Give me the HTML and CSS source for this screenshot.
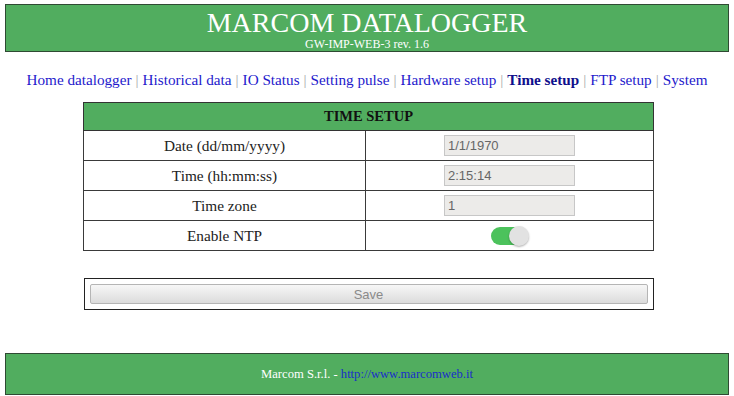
FILE: index.html
```html
<!DOCTYPE html>
<html>
<head>
<meta charset="utf-8">
<link rel="stylesheet" href="styles.css">
</head>
<body>
<header class="top">
  <div class="title">MARCOM DATALOGGER</div>
  <div class="subtitle">GW-IMP-WEB-3 rev. 1.6</div>
</header>
<nav class="menu">
  <a href="#">Home datalogger</a><span class="sep">|</span><a href="#">Historical data</a><span class="sep">|</span><a href="#">IO Status</a><span class="sep">|</span><a href="#">Setting pulse</a><span class="sep">|</span><a href="#">Hardware setup</a><span class="sep">|</span><a href="#" class="active">Time setup</a><span class="sep">|</span><a href="#">FTP setup</a><span class="sep">|</span><a href="#">System</a>
</nav>
<main class="content">
  <table class="setup">
    <tr><th colspan="2">TIME SETUP</th></tr>
    <tr><td class="label">Date (dd/mm/yyyy)</td><td><input class="field" type="text" value="1/1/1970" disabled></td></tr>
    <tr><td class="label">Time (hh:mm:ss)</td><td><input class="field" type="text" value="2:15:14" disabled></td></tr>
    <tr><td class="label">Time zone</td><td><input class="field" type="text" value="1" disabled></td></tr>
    <tr><td class="label">Enable NTP</td><td><span class="toggle"><span class="knob"></span></span></td></tr>
  </table>
  <div class="savebox">
    <button class="save" disabled>Save</button>
  </div>
</main>
<footer class="bottom">
  <span>Marcom S.r.l. - </span><a href="#">http://www.marcomweb.it</a>
</footer>
</body>
</html>
```
FILE: styles.css
```css
html, body { background: #ffffff; }
body {
  margin: 4px 5px 0;
  font-family: "Liberation Serif", "Times New Roman", serif;
  color: #222;
}
.top {
  height: 46px;
  border: 1px solid #2f4a33;
  background: #51ad5f;
  color: #ffffff;
  text-align: center;
}
.title {
  font-size: 28px;
  line-height: 28px;
  padding-top: 4px;
}
.subtitle {
  font-size: 12px;
  line-height: 12px;
  padding-top: 1px;
}
.menu {
  text-align: center;
  font-size: 15.2px;
  line-height: 20px;
  padding-top: 18px;
  height: 32px;
}
.menu a {
  color: #2419cc;
  text-decoration: none;
}
.menu a.active {
  font-weight: bold;
  color: #0f0f8c;
}
.sep {
  color: #aaaaaa;
  margin: 0 4px;
}
.content {
  display: block;
  padding-left: 3px;
}
.setup {
  width: 571px;
  margin: 0 auto;
  border-collapse: collapse;
  border: 1px solid #333;
  font-size: 15.3px;
}
.setup th {
  background: #51ad5f;
  color: #111;
  font-size: 14.5px;
  height: 27px;
  padding: 0;
  border: 1px solid #333;
}
.setup td {
  border: 1px solid #3a3a3a;
  text-align: center;
  height: 29px;
  padding: 0;
}
.setup td.label {
  width: 281px;
}
.field {
  width: 131px;
  height: 21px;
  box-sizing: border-box;
  border: 1px solid #c7c7c7;
  background: #ecebe9;
  color: #666;
  font-family: "Liberation Sans", Arial, sans-serif;
  font-size: 13px;
  padding: 0 3px;
  margin: 0;
  vertical-align: middle;
}
.toggle {
  display: inline-block;
  position: relative;
  width: 37px;
  height: 18px;
  border-radius: 9px;
  background: #4cc25c;
  vertical-align: middle;
}
.knob {
  position: absolute;
  right: -1px;
  top: -1px;
  width: 20px;
  height: 20px;
  border-radius: 50%;
  background: #e2e2e2;
  box-shadow: 0 1px 2px rgba(0,0,0,0.3);
}
.savebox {
  width: 570px;
  box-sizing: border-box;
  margin: 27px auto 0;
  border: 1px solid #222;
  padding: 5px;
}
.save {
  display: block;
  width: 100%;
  height: 20px;
  border: 1px solid #b5b5b5;
  border-radius: 2px;
  background: linear-gradient(#f7f7f7, #dcdcdc);
  color: #8a8a8a;
  font-family: "Liberation Sans", Arial, sans-serif;
  font-size: 13px;
  padding: 0;
}
.bottom {
  margin-top: 43px;
  height: 40px;
  border: 1px solid #2f4a33;
  background: #51ad5f;
  text-align: center;
  font-size: 12.6px;
  line-height: 40px;
  color: #ffffff;
}
.bottom a {
  color: #1a2fc8;
  text-decoration: none;
}
```
